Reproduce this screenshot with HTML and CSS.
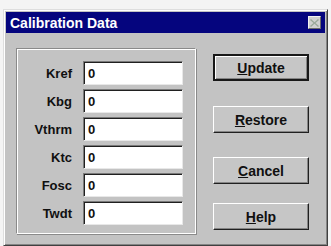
FILE: index.html
```html
<!DOCTYPE html>
<html lang="en">
<head>
    <meta charset="UTF-8">
    <title>Calibration Data</title>
    <link rel="stylesheet" href="styles.css">
</head>
<body>
    <div class="window">
        <div class="title-bar">
            <span class="title">Calibration Data</span>
            <span class="close-btn">
                <svg width="9" height="8" viewBox="0 0 9 8">
                    <path d="M1 0 L4.5 3.2 L8 0 L9 1 L5.5 4 L9 7 L8 8 L4.5 4.8 L1 8 L0 7 L3.5 4 L0 1 Z" fill="#9aa89a"/>
                </svg>
            </span>
        </div>
        <div class="content">
            <div class="group-box">
                <label class="field-label" for="kref">Kref</label>
                <input class="field" id="kref" type="text" value="0">
                <label class="field-label" for="kbg">Kbg</label>
                <input class="field" id="kbg" type="text" value="0">
                <label class="field-label" for="vthrm">Vthrm</label>
                <input class="field" id="vthrm" type="text" value="0">
                <label class="field-label" for="ktc">Ktc</label>
                <input class="field" id="ktc" type="text" value="0">
                <label class="field-label" for="fosc">Fosc</label>
                <input class="field" id="fosc" type="text" value="0">
                <label class="field-label" for="twdt">Twdt</label>
                <input class="field" id="twdt" type="text" value="0">
            </div>
            <div class="buttons">
                <button class="btn btn-default"><u>U</u>pdate</button>
                <button class="btn btn-restore"><u>R</u>estore</button>
                <button class="btn btn-cancel"><u>C</u>ancel</button>
                <button class="btn btn-help"><u>H</u>elp</button>
            </div>
        </div>
    </div>
</body>
</html>
```

FILE: styles.css
```css
body {
    margin: 0;
    background-color: #f4f4f4;
    font-family: "Liberation Sans", Arial, sans-serif;
}
.window {
    box-sizing: border-box;
    width: 325px;
    height: 237px;
    margin: 9px 0 0 3px;
    padding: 1px;
    background-color: #c3c3c3;
    border: 1px solid #dedede;
    border-right-color: #404040;
    border-bottom-color: #404040;
    box-shadow: inset 1px 1px #ffffff, inset -1px -1px #858585;
}
.title-bar {
    height: 21px;
    margin: 1px;
    padding: 0 4px 0 4px;
    background-color: #05057e;
    display: flex;
    align-items: center;
    justify-content: space-between;
}
.title {
    color: #ffffff;
    font-weight: bold;
    font-size: 14px;
}
.close-btn {
    box-sizing: border-box;
    width: 13px;
    height: 13px;
    background-color: #d0d0d0;
    border: 1px solid #f2f2f2;
    border-right-color: #6a6a6a;
    border-bottom-color: #6a6a6a;
    display: flex;
    align-items: center;
    justify-content: center;
}
.content {
    display: flex;
    padding: 14px 0 0 11px;
}
.group-box {
    box-sizing: border-box;
    width: 180px;
    height: 186px;
    padding: 12px 14px 0 0;
    border: 1px solid #8a8a8a;
    border-right-color: #ffffff;
    border-bottom-color: #ffffff;
    box-shadow: inset 1px 1px #ffffff, 1px 1px #8a8a8a;
    display: grid;
    grid-template-columns: 55px 100px;
    column-gap: 11px;
    row-gap: 4px;
    grid-auto-rows: 24px;
    align-content: start;
}
.field-label {
    text-align: right;
    align-self: center;
    font-weight: bold;
    font-size: 13px;
    color: #101010;
}
.field {
    box-sizing: border-box;
    width: 100px;
    height: 24px;
    margin: 0;
    padding: 0 0 0 4px;
    background-color: #ffffff;
    border: 1px solid #7a7a7a;
    border-right-color: #e8e8e8;
    border-bottom-color: #e8e8e8;
    box-shadow: inset 1px 1px #202020;
    font-family: "Liberation Sans", Arial, sans-serif;
    font-weight: bold;
    font-size: 13px;
    color: #101010;
}
.buttons {
    display: flex;
    flex-direction: column;
    margin: 6px 0 0 17px;
}
.btn {
    box-sizing: border-box;
    width: 96px;
    height: 27px;
    padding: 0;
    background-color: #c6c6c6;
    border: 1px solid #ffffff;
    border-right-color: #202020;
    border-bottom-color: #202020;
    box-shadow: inset -1px -1px #858585;
    font-family: "Liberation Sans", Arial, sans-serif;
    font-weight: bold;
    font-size: 14px;
    color: #101010;
}
.btn-default {
    border: 2px solid #181818;
    box-shadow: inset 1px 1px #ffffff, inset -1px -1px #858585;
}
.btn-restore {
    margin-top: 25px;
}
.btn-cancel {
    margin-top: 24px;
}
.btn-help {
    margin-top: 19px;
}
```
